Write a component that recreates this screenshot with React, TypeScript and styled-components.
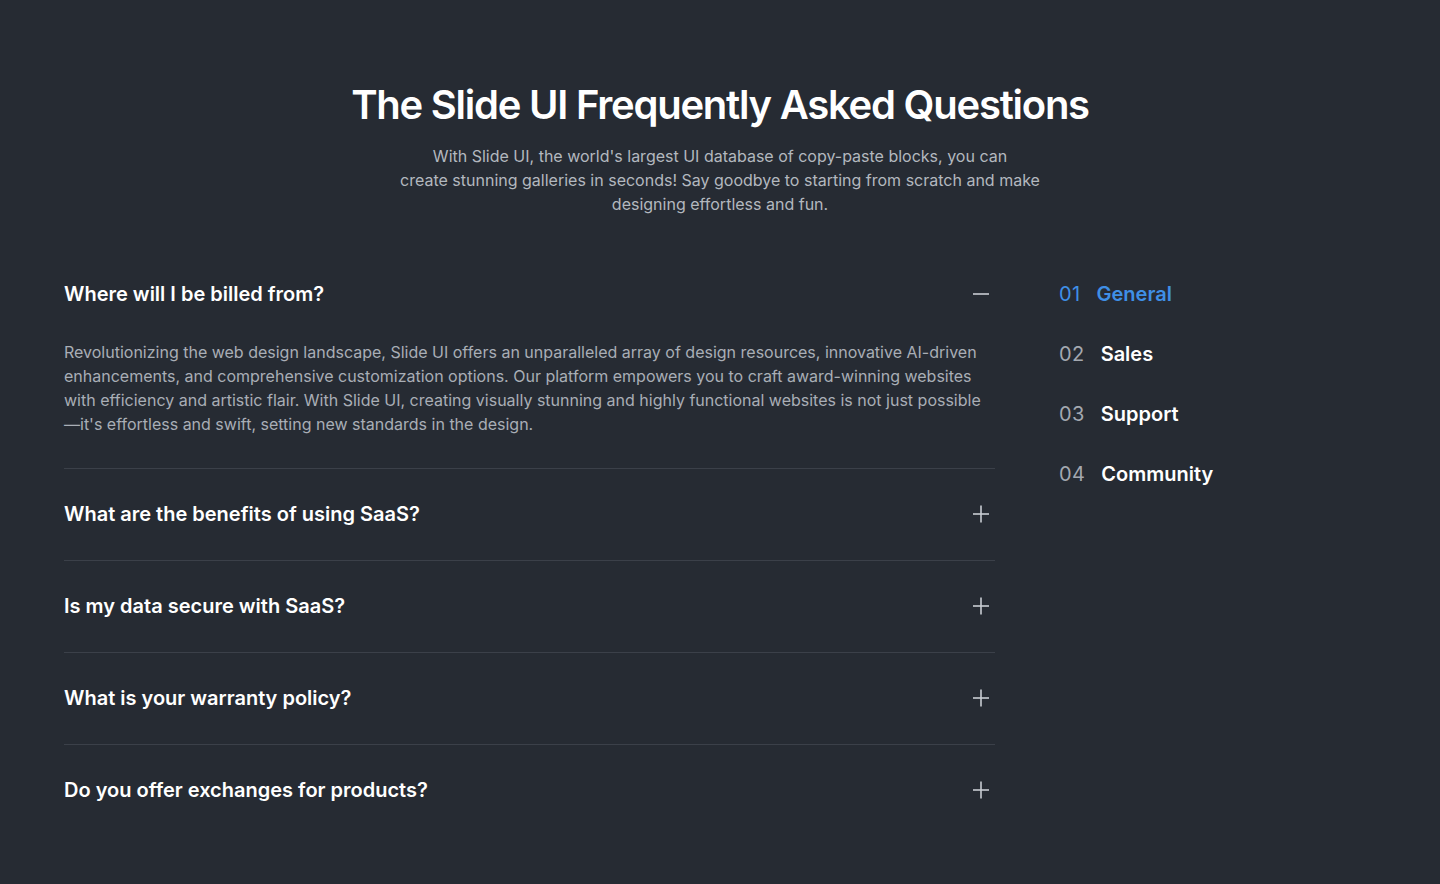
import React, { useState } from 'react';
import styled, { createGlobalStyle } from 'styled-components';

const GlobalStyle = createGlobalStyle`
  * { box-sizing: border-box; }
  html, body {
    margin: 0;
    padding: 0;
    background: #262b33;
    font-family: Inter, "Noto Sans", sans-serif;
    -webkit-font-smoothing: antialiased;
  }
`;

const Section = styled.section`
  min-height: 884px;
  background: #262b33;
  padding: 80px 64px 60px;
`;

const Header = styled.header`
  text-align: center;
`;

const Title = styled.h1`
  margin: 0;
  font-size: 40px;
  line-height: 50px;
  font-weight: 600;
  letter-spacing: -0.031em;
  color: #ffffff;
`;

const Lead = styled.p`
  width: 680px;
  margin: 14px auto 0;
  font-size: 16px;
  line-height: 24px;
  color: #b3b8bf;
`;

const Layout = styled.div`
  display: grid;
  grid-template-columns: 931px 1fr;
  column-gap: 64px;
  margin-top: 33px;
`;

const List = styled.div`
  display: flex;
  flex-direction: column;
`;

const Item = styled.div`
  border-bottom: 1px solid #3b4049;

  &:last-child {
    border-bottom: none;
  }
`;

const Question = styled.button`
  display: flex;
  align-items: center;
  justify-content: space-between;
  width: 100%;
  padding: 31px 6px 32px 0;
  background: none;
  border: none;
  cursor: pointer;
  font-family: inherit;
  font-size: 20px;
  line-height: 28px;
  font-weight: 600;
  color: #ffffff;
  text-align: left;
`;

const Answer = styled.p`
  margin: 0;
  padding: 0 0 32px;
  font-size: 16px;
  line-height: 24px;
  color: #a9aeb6;
`;

const Nav = styled.nav`
  display: flex;
  flex-direction: column;
  gap: 32px;
  padding-top: 31px;
`;

const NavItem = styled.a<{ $active?: boolean }>`
  display: flex;
  align-items: center;
  gap: 16px;
  font-size: 20px;
  line-height: 28px;
  text-decoration: none;
  cursor: pointer;
  color: ${p => (p.$active ? '#3f8fe6' : '#ffffff')};
`;

const NavNum = styled.span<{ $active?: boolean }>`
  font-weight: 400;
  letter-spacing: 0.02em;
  color: ${p => (p.$active ? '#3f8fe6' : '#a3a8b0')};
`;

const NavLabel = styled.span`
  font-weight: 600;
`;

const Toggle = ({ open }: { open: boolean }) => (
  <svg width="16" height="18" viewBox="0 0 16 18" fill="none" stroke="#c9cdd3" strokeWidth="1.6">
    <line x1="0" y1="9" x2="16" y2="9" />
    {!open && <line x1="8" y1="0.5" x2="8" y2="17.5" />}
  </svg>
);

const faqs = [
  {
    q: 'Where will I be billed from?',
    a: "Revolutionizing the web design landscape, Slide UI offers an unparalleled array of design resources, innovative AI-driven enhancements, and comprehensive customization options. Our platform empowers you to craft award-winning websites with efficiency and artistic flair. With Slide UI, creating visually stunning and highly functional websites is not just possible \u2014it's effortless and swift, setting new standards in the design.",
  },
  { q: 'What are the benefits of using SaaS?', a: '' },
  { q: 'Is my data secure with SaaS?', a: '' },
  { q: 'What is your warranty policy?', a: '' },
  { q: 'Do you offer exchanges for products?', a: '' },
];

const topics = ['General', 'Sales', 'Support', 'Community'];

export default function App() {
  const [open, setOpen] = useState(0);
  const [topic, setTopic] = useState(0);

  return (
    <Section>
      <GlobalStyle />
      <Header>
        <Title>The Slide UI Frequently Asked Questions</Title>
        <Lead>
          With Slide UI, the world's largest UI database of copy-paste blocks, you can
          <br />
          create stunning galleries in seconds! Say goodbye to starting from scratch and make designing effortless and
          fun.
        </Lead>
      </Header>
      <Layout>
        <List>
          {faqs.map((f, i) => (
            <Item key={f.q}>
              <Question onClick={() => setOpen(open === i ? -1 : i)}>
                {f.q}
                <Toggle open={open === i} />
              </Question>
              {open === i && f.a && <Answer>{f.a}</Answer>}
            </Item>
          ))}
        </List>
        <Nav>
          {topics.map((t, i) => (
            <NavItem key={t} $active={topic === i} onClick={() => setTopic(i)}>
              <NavNum $active={topic === i}>{String(i + 1).padStart(2, '0')}</NavNum>
              <NavLabel>{t}</NavLabel>
            </NavItem>
          ))}
        </Nav>
      </Layout>
    </Section>
  );
}
